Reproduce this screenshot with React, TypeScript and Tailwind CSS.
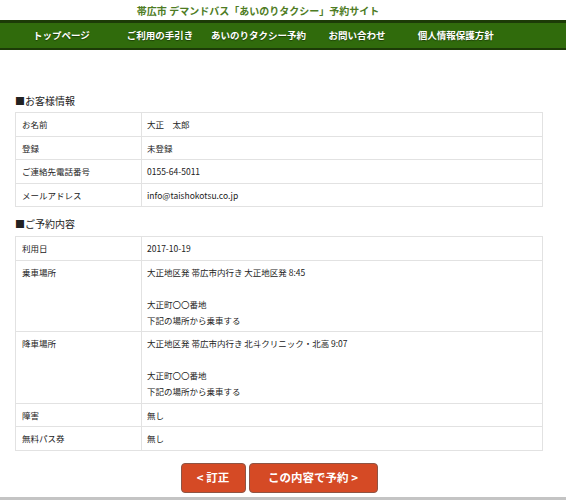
import React from "react";

const font = { fontFamily: '"Noto Sans CJK JP", "Noto Sans", sans-serif' };

const navItems = ["トップページ", "ご利用の手引き", "あいのりタクシー予約", "お問い合わせ", "個人情報保護方針"];

type Row = { label: string; lines: string[] };

const customer: Row[] = [
  { label: "お名前", lines: ["大正　太郎"] },
  { label: "登録", lines: ["未登録"] },
  { label: "ご連絡先電話番号", lines: ["0155-64-5011"] },
  { label: "メールアドレス", lines: ["info@taishokotsu.co.jp"] },
];

const reservation: Row[] = [
  { label: "利用日", lines: ["2017-10-19"] },
  { label: "乗車場所", lines: ["大正地区発 帯広市内行き 大正地区発 8:45", "", "大正町〇〇番地", "下記の場所から乗車する"] },
  { label: "降車場所", lines: ["大正地区発 帯広市内行き 北斗クリニック・北高 9:07", "", "大正町〇〇番地", "下記の場所から乗車する"] },
  { label: "障害", lines: ["無し"] },
  { label: "無料パス券", lines: ["無し"] },
];

function InfoTable({ rows }: { rows: Row[] }) {
  return (
    <table className="w-[528px] border-collapse border border-[#e2e2e2] text-[8.5px] text-[#222]">
      <tbody>
        {rows.map((r) => (
          <tr key={r.label}>
            <td className="w-[126px] border border-[#e2e2e2] px-[6px] py-[3.25px] align-top leading-[16px]">{r.label}</td>
            <td className="border border-[#e2e2e2] px-[5px] py-[3.25px] align-top leading-[16px]">
              {r.lines.map((l, i) => (
                <div key={i} className="h-[16px] whitespace-nowrap">
                  {l}
                </div>
              ))}
            </td>
          </tr>
        ))}
      </tbody>
    </table>
  );
}

export default function App() {
  return (
    <div className="w-[566px] h-[500px] overflow-hidden bg-white flex flex-col" style={font}>
      <div className="w-[516px] h-[20px] flex items-center justify-center text-[10px] font-bold text-[#4e7c24]">
        帯広市 デマンドバス「あいのりタクシー」予約サイト
      </div>
      <div className="h-[30px] bg-[#306b0c] border-t-[3px] border-b-[2px] border-[#1c3b07] flex">
        <div className="ml-[12px] w-[493px] grid grid-cols-5 items-center">
          {navItems.map((n) => (
            <div key={n} className="text-center text-white font-bold text-[9.5px] whitespace-nowrap [text-shadow:0_1px_1px_rgba(0,0,0,0.4)]">
              {n}
            </div>
          ))}
        </div>
      </div>
      <div className="pl-[15px] pt-[43px] flex flex-col">
        <div className="h-[16px] leading-[16px] text-[10px] text-[#222]">■お客様情報</div>
        <div className="mt-[3px]">
          <InfoTable rows={customer} />
        </div>
        <div className="mt-[9px] h-[16px] leading-[16px] text-[10px] text-[#222]">■ご予約内容</div>
        <div className="mt-[4px]">
          <InfoTable rows={reservation} />
        </div>
        <div className="mt-[12px] w-[528px] flex justify-center gap-[3px]">
          <button className="w-[65px] h-[30px] rounded-[4px] bg-[#d54a25] border border-[#8e5444] text-white font-bold text-[11.5px] flex items-center justify-center">
            &lt; 訂正
          </button>
          <button className="w-[129px] h-[30px] rounded-[4px] bg-[#d54a25] border border-[#8e5444] text-white font-bold text-[11.5px] flex items-center justify-center">
            この内容で予約 &gt;
          </button>
        </div>
      </div>
      <div className="mt-auto h-[3px] bg-[#c4c4c4]" />
    </div>
  );
}
